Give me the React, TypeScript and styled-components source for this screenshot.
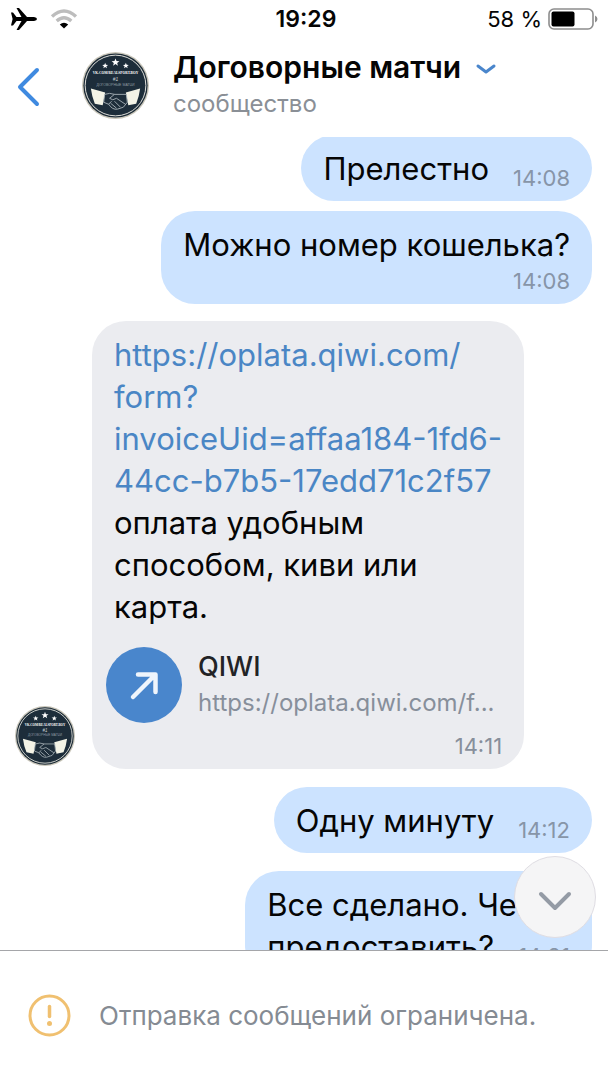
import React from 'react';
import styled, { createGlobalStyle } from 'styled-components';

const GlobalStyle = createGlobalStyle`
  *, *::before, *::after { box-sizing: border-box; }
  body {
    margin: 0;
    background: #ffffff;
    font-family: Inter, "Liberation Sans", sans-serif;
    color: #050505;
  }
  svg { display: block; flex: none; }
`;

const Screen = styled.div`
  display: flex;
  flex-direction: column;
  height: 100vh;
`;

const StatusBar = styled.div`
  display: grid;
  grid-template-columns: 1fr auto 1fr;
  align-items: center;
  height: 38px;
  padding: 0 10px;
  flex: none;
`;

const StatusGroup = styled.div<{ $end?: boolean }>`
  display: flex;
  align-items: center;
  justify-content: ${(p) => (p.$end ? 'flex-end' : 'flex-start')};
  gap: ${(p) => (p.$end ? '6px' : '12px')};
  font-size: 22px;
  line-height: 28px;
`;

const Clock = styled.time`
  padding-left: 4px;
  font-size: 23px;
  line-height: 28px;
  font-weight: 600;
`;

const Header = styled.header`
  display: flex;
  align-items: center;
  height: 99px;
  padding: 0 15px 4px;
  flex: none;
`;

const IconButton = styled.button`
  display: flex;
  padding: 0;
  border: 0;
  background: none;
  cursor: pointer;
`;

const BackButton = styled(IconButton)`
  width: 67px;
`;

const HeaderText = styled.div`
  margin-left: 24px;
  padding-bottom: 2px;
`;

const TitleRow = styled.div`
  display: flex;
  align-items: center;
  gap: 14px;
`;

const Title = styled.h1`
  margin: 0;
  font-size: 30px;
  line-height: 38px;
  font-weight: 600;
`;

const Subtitle = styled.p`
  margin: 0;
  font-size: 24px;
  line-height: 36px;
  color: #8a8f96;
`;

const Chat = styled.main`
  position: relative;
  flex: 1;
  min-height: 0;
  overflow: hidden;
`;

const Messages = styled.div`
  display: flex;
  flex-direction: column;
  margin-top: -2px;
  padding: 0 16px 0 15px;
`;

const Row = styled.div<{ $own?: boolean; $space: number }>`
  display: flex;
  align-items: flex-end;
  justify-content: ${(p) => (p.$own ? 'flex-end' : 'flex-start')};
  gap: 17px;
  margin-bottom: ${(p) => p.$space}px;
`;

const AuthorLink = styled.a`
  margin-bottom: 3px;
`;

const Bubble = styled.div<{ $own?: boolean }>`
  display: flex;
  flex-direction: column;
  align-items: flex-end;
  padding: 13px 22px 11px;
  border-radius: 34px;
  background: ${(p) => (p.$own ? '#cce3ff' : '#ebecf0')};
`;

const LastLine = styled.div`
  display: flex;
  align-items: flex-end;
  gap: 24px;
`;

const Text = styled.p`
  margin: 0;
  align-self: flex-start;
  font-size: 31px;
  line-height: 42px;
  white-space: nowrap;
`;

const TextLink = styled.a`
  color: #4a86c5;
  text-decoration: none;
`;

const Time = styled.time<{ $below?: boolean; $own?: boolean }>`
  margin-top: ${(p) => (p.$below ? '3px' : '0')};
  font-size: 22px;
  line-height: 24px;
  color: ${(p) => (p.$own ? '#8795a8' : '#878f9b')};
`;

const Attachment = styled.a`
  display: flex;
  align-items: center;
  align-self: stretch;
  gap: 16px;
  margin: 19px 0 8px -8px;
  color: #222326;
  text-decoration: none;
`;

const AttachmentText = styled.span`
  display: flex;
  flex-direction: column;
  min-width: 0;
`;

const AttachmentTitle = styled.span`
  font-size: 27px;
  line-height: 36px;
  font-weight: 500;
`;

const AttachmentUrl = styled.span`
  font-size: 24px;
  line-height: 36px;
  color: #878f9b;
  white-space: nowrap;
`;

const ScrollDown = styled(IconButton)`
  position: absolute;
  right: 12px;
  bottom: 12px;
  width: 82px;
  height: 82px;
  padding-top: 7px;
  align-items: center;
  justify-content: center;
  border: 1px solid #dfdde3;
  border-radius: 50%;
  background: #f5f5f6;
`;

const Footer = styled.footer`
  display: flex;
  align-items: center;
  gap: 28px;
  flex: none;
  height: 130px;
  padding: 0 28px;
  border-top: 1px solid #a5a6a9;
  font-size: 26px;
  line-height: 34px;
  color: #858b93;
`;

const STAR = 'M0 -5 L1.3 -1.6 L5 -1.5 L2.1 0.7 L3.1 4.2 L0 2.1 L-3.1 4.2 L-2.1 0.7 L-5 -1.5 L-1.3 -1.6Z';

const Avatar = ({ size }: { size: number }) => (
  <svg width={size} height={size} viewBox="0 0 68 68" role="img" aria-label="Договорные матчи">
    <circle cx="34" cy="34" r="34" fill="#c9c6ba" />
    <circle cx="34" cy="34" r="32.6" fill="#1b2a36" />
    <circle cx="34" cy="34" r="30.8" fill="#1d2d3a" stroke="#dfe0da" strokeWidth="1" />
    <g fill="#ffffff">
      <path transform="translate(34 10.5) scale(0.8)" d={STAR} />
      <path transform="translate(23.5 14) scale(0.6)" d={STAR} />
      <path transform="translate(44.5 14) scale(0.6)" d={STAR} />
    </g>
    <text x="34" y="22.500" textAnchor="middle" fontSize="3.6" fontWeight="700" fill="#ffffff" fontFamily="Liberation Serif, serif">VK.COM/REALSPORT.BOY</text>
    <text x="34" y="29" textAnchor="middle" fontSize="5" fontStyle="italic" fill="#c8ced2" fontFamily="Liberation Sans, sans-serif">#1</text>
    <text x="34" y="34.500" textAnchor="middle" fontSize="3.6" fill="#8f9aa3" fontFamily="Liberation Sans, sans-serif">ДОГОВОРНЫЕ МАТЧИ</text>
    <path d="M9 37 L23.500 41 L21 54 L13 52.500 Q10 45 9 37Z M59 37 L44.500 41 L47 54 L55 52.500 Q58 45 59 37Z" fill="#f3f3e6" />
    <path d="M23 43 Q28 41 33 43 L45 43 M23 43 L22 51 L27 53 Q31 59 36 58 L42 56 L46 51 L45 43 M33 43 L28 47 Q31 50 35 47 L44 53 M33 50 L39 56 M29 52 L35 57 M27 53 L30 50" fill="none" stroke="#aab4ba" strokeWidth="0.9" strokeLinejoin="round" />
  </svg>
);

const PlaneIcon = () => (
  <svg width="28" height="26" viewBox="0 0 28 26" aria-hidden="true">
    <path d="M1 6.500 H3 L6.500 11 H11.500 L6.500 2 H9 L17 11 H24 Q27 11.300 27 13 Q27 14.700 24 15 H17 L9 24 H6.500 L11.500 15 H6.500 L3 19.500 H1 L2.600 13Z" />
  </svg>
);

const WifiIcon = () => (
  <svg width="28" height="20" viewBox="0 0 28 20" aria-hidden="true">
    <path d="M2 7.500 Q14 -3.500 26 7.500" fill="none" stroke="#bdbdbd" strokeWidth="3.400" />
    <path d="M6.700 12 Q14 5.500 21.300 12" fill="none" stroke="#bdbdbd" strokeWidth="3.400" />
    <path d="M9.800 15.600 Q14 12 18.200 15.600 L14 19.600Z" />
  </svg>
);

const BatteryIcon = () => (
  <svg width="50" height="22" viewBox="0 0 50 22" aria-hidden="true">
    <rect x="1" y="1" width="44" height="20" rx="5" fill="none" stroke="#8d8d8d" strokeWidth="1.600" />
    <rect x="3.500" y="3.500" width="23" height="15" rx="2" />
    <path d="M47 7.500 Q49.500 8.500 49.500 11 Q49.500 13.500 47 14.500Z" fill="#8d8d8d" />
  </svg>
);

type MessageProps = {
  lead?: string;
  text: string;
  time: string;
  space: number;
  below?: boolean;
};

const OwnMessage = ({ lead, text, time, space, below }: MessageProps) => (
  <Row $own $space={space}>
    <Bubble $own>
      {lead && <Text>{lead}</Text>}
      {below ? (
        <>
          <Text>{text}</Text>
          <Time $own $below>{time}</Time>
        </>
      ) : (
        <LastLine>
          <Text>{text}</Text>
          <Time $own>{time}</Time>
        </LastLine>
      )}
    </Bubble>
  </Row>
);

export default function App() {
  return (
    <>
      <GlobalStyle />
      <Screen>
        <StatusBar>
          <StatusGroup>
            <PlaneIcon />
            <WifiIcon />
          </StatusGroup>
          <Clock>19:29</Clock>
          <StatusGroup $end>
            <span>58 %</span>
            <BatteryIcon />
          </StatusGroup>
        </StatusBar>
        <Header>
          <BackButton type="button" aria-label="Назад">
            <svg width="26" height="42" viewBox="0 0 26 42" fill="none" stroke="#3f8ae0" strokeWidth="4" strokeLinecap="round" strokeLinejoin="round">
              <path d="M22 5 L5 22 L22 39" />
            </svg>
          </BackButton>
          <Avatar size={67} />
          <HeaderText>
            <TitleRow>
              <Title>Договорные матчи</Title>
              <IconButton type="button" aria-label="Меню сообщества">
                <svg width="22" height="14" viewBox="0 0 22 14" fill="none" stroke="#4a86cc" strokeWidth="3" strokeLinecap="round" strokeLinejoin="round">
                  <path d="M3 6 L11 12 L19 6" />
                </svg>
              </IconButton>
            </TitleRow>
            <Subtitle>сообщество</Subtitle>
          </HeaderText>
        </Header>
        <Chat>
          <Messages>
            <OwnMessage text="Прелестно" time="14:08" space={10} />
            <OwnMessage text="Можно номер кошелька?" time="14:08" space={17} below />
            <Row $space={18}>
              <AuthorLink href="#community">
                <Avatar size={60} />
              </AuthorLink>
              <Bubble>
                <Text>
                  <TextLink href="#invoice">
                    https://oplata.qiwi.com/
                    <br />
                    form?
                    <br />
                    invoiceUid=affaa184-1fd6-
                    <br />
                    44cc-b7b5-17edd71c2f57
                  </TextLink>
                  <br />
                  оплата удобным
                  <br />
                  способом, киви или
                  <br />
                  карта.
                </Text>
                <Attachment href="#invoice">
                  <svg width="76" height="76" viewBox="0 0 76 76" aria-hidden="true">
                    <circle cx="38" cy="38" r="38" fill="#4986cc" />
                    <path d="M27 50 L49 28 M32 27.500 H49.500 V45" fill="none" stroke="#eff5fc" strokeWidth="4.500" strokeLinecap="round" strokeLinejoin="round" />
                  </svg>
                  <AttachmentText>
                    <AttachmentTitle>QIWI</AttachmentTitle>
                    <AttachmentUrl>https://oplata.qiwi.com/f...</AttachmentUrl>
                  </AttachmentText>
                </Attachment>
                <Time $below>14:11</Time>
              </Bubble>
            </Row>
            <OwnMessage text="Одну минуту" time="14:12" space={18} />
            <OwnMessage lead="Все сделано. Чек" text="предоставить?" time="14:21" space={10} />
          </Messages>
          <ScrollDown type="button" aria-label="Вниз">
            <svg width="36" height="22" viewBox="0 0 36 22" fill="none" stroke="#949ba5" strokeWidth="4" strokeLinecap="round" strokeLinejoin="round">
              <path d="M4 4 L18 18 L32 4" />
            </svg>
          </ScrollDown>
        </Chat>
        <Footer>
          <svg width="43" height="43" viewBox="0 0 43 43" fill="none" stroke="#f0c070" strokeLinecap="round" aria-hidden="true">
            <circle cx="21.500" cy="21.500" r="19.500" strokeWidth="3" />
            <path d="M21.500 12.500 V22.500" strokeWidth="3.500" />
            <circle cx="21.500" cy="29.500" r="2.500" fill="#f0c070" stroke="none" />
          </svg>
          <span>Отправка сообщений ограничена.</span>
        </Footer>
      </Screen>
    </>
  );
}
